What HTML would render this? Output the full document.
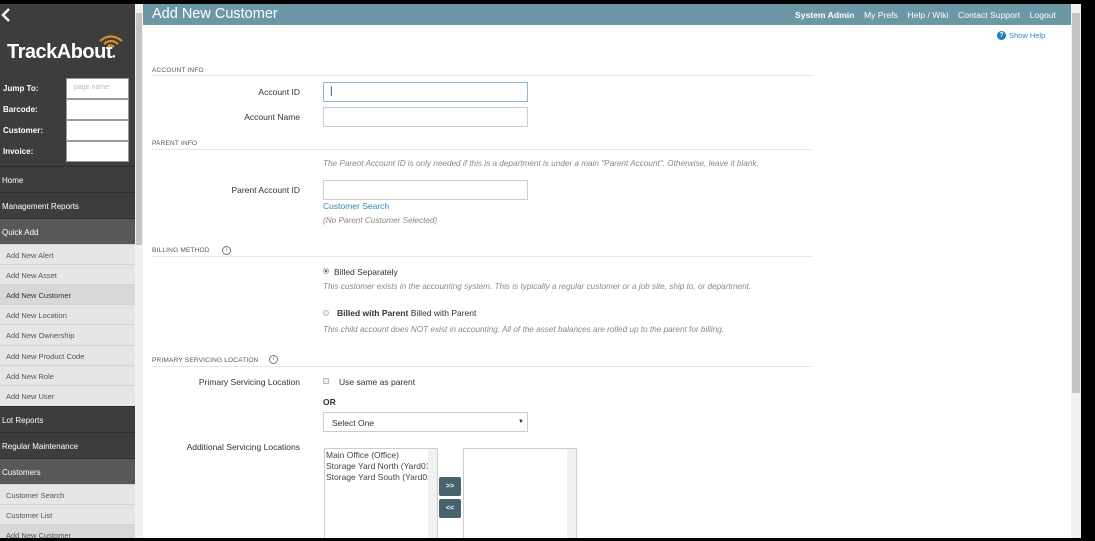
<!DOCTYPE html>
<html><head><meta charset="utf-8"><style>
*{margin:0;padding:0;box-sizing:border-box}
body{width:1095px;height:541px;background:#000;position:relative;overflow:hidden;font-family:"Liberation Sans",sans-serif}
.a{position:absolute}
#side{left:0;top:4px;width:135px;height:534px;background:#3d3d3d;overflow:hidden}
.lbl{color:#fff;font-size:8px;font-weight:bold;left:3px}
.in{background:#fff;border:1px solid #999;left:66px;width:63px;height:21px}
.nav{left:0;width:135px;height:26px;color:#fff;font-size:8px;padding:9px 0 0 2px;border-top:1px solid #2e2e2e}
.sub{left:0;width:135px;height:21px;background:#e6e6e6;color:#555;font-size:7.5px;padding:6px 0 0 6px;border-top:1px solid #d4d4d4}
.sec{font-size:6.5px;color:#555;left:152px;letter-spacing:.2px}
.hr{left:152px;width:660px;height:1px;background:#e6e6e6}
.fl{font-size:8.5px;color:#333;text-align:right;width:150px;left:150px}
.box{border:1px solid #ccc;background:#fff;left:323px;width:205px;height:20px}
.it{font-size:8.2px;color:#888;font-style:italic;left:323px}
.tx{font-size:8.5px;color:#333}
.info{width:9px;height:9px;border:1px solid #777;border-radius:50%;font-size:6px;color:#777;text-align:center;line-height:7px}
</style></head><body>
<div id="side" class="a">
 <svg class="a" style="left:1px;top:4px" width="10" height="14" viewBox="0 0 10 14"><path d="M8 1 L2 7 L8 13" fill="none" stroke="#fff" stroke-width="2.5"/></svg>
 <div class="a" style="left:7px;top:37px;color:#fff;font-size:20px;font-weight:bold;letter-spacing:-0.5px">TrackAbout<span style="font-size:6px">&#9679;</span></div>
 <svg class="a" style="left:97px;top:29px" width="28" height="16" viewBox="0 0 28 16"><g fill="none" stroke="#d7902a" stroke-width="2.2"><path d="M3 8 Q14 -1 25 8"/><path d="M7 11 Q14 5 21 11"/><path d="M11 14 Q14 11 17 14"/></g></svg>
 <div class="a lbl" style="top:80px">Jump To:</div>
 <div class="a lbl" style="top:101px">Barcode:</div>
 <div class="a lbl" style="top:122px">Customer:</div>
 <div class="a lbl" style="top:143px">Invoice:</div>
 <div class="a in" style="top:74px;font-size:7px;color:#bbb;padding:5px 0 0 7px">page name</div>
 <div class="a in" style="top:95px"></div>
 <div class="a in" style="top:116px"></div>
 <div class="a in" style="top:137px"></div>
 <div class="a nav" style="top:162px">Home</div>
 <div class="a nav" style="top:188px">Management Reports</div>
 <div class="a nav" style="top:214px;background:#585858">Quick Add</div>
 <div class="a sub" style="top:240px">Add New Alert</div>
 <div class="a sub" style="top:260px">Add New Asset</div>
 <div class="a sub" style="top:280px;background:#d8d8d8;color:#333">Add New Customer</div>
 <div class="a sub" style="top:300px">Add New Location</div>
 <div class="a sub" style="top:320px">Add New Ownership</div>
 <div class="a sub" style="top:341px">Add New Product Code</div>
 <div class="a sub" style="top:361px">Add New Role</div>
 <div class="a sub" style="top:381px">Add New User</div>
 <div class="a nav" style="top:402px">Lot Reports</div>
 <div class="a nav" style="top:428px">Regular Maintenance</div>
 <div class="a nav" style="top:454px;background:#585858">Customers</div>
 <div class="a sub" style="top:480px">Customer Search</div>
 <div class="a sub" style="top:500px">Customer List</div>
 <div class="a sub" style="top:520px;background:#d8d8d8">Add New Customer</div>
</div>
<div class="a" style="left:135px;top:4px;width:8px;height:534px;background:#f1f1f1"></div>
<div class="a" style="left:136px;top:13px;width:6px;height:232px;background:#c4c4c4"></div>
<div class="a" style="left:143px;top:4px;width:928px;height:534px;background:#fff;overflow:hidden">
<div class="a" style="left:181px;top:444px;width:114px;height:95px;border:1px solid #ccc;font-size:8.5px;color:#444;padding:1px 0 0 1px;line-height:11px;overflow:hidden;white-space:nowrap">Main Office (Office)<br>Storage Yard North (Yard01<br>Storage Yard South (Yard02</div>
<div class="a" style="left:285px;top:445px;width:9px;height:90px;background:#f1f1f1"></div>
<div class="a" style="left:320px;top:444px;width:114px;height:95px;border:1px solid #ccc"></div>
<div class="a" style="left:424px;top:445px;width:9px;height:90px;background:#f1f1f1"></div>
</div>
<div class="a" style="left:1071px;top:4px;width:10px;height:534px;background:#f1f1f1"></div>
<div class="a" style="left:1072px;top:13px;width:8px;height:380px;background:#c4c4c4"></div>
<div class="a" style="left:143px;top:4px;width:928px;height:21px;background:#6b97a6"></div>
<div class="a" style="left:152px;top:6px;color:#fff;font-size:14.5px">Add New Customer</div>
<div class="a" style="left:795px;top:10px;color:#fff;font-size:8.6px"><b>System Admin</b>&nbsp;&nbsp;&nbsp; My Prefs &nbsp;&nbsp; Help / Wiki &nbsp;&nbsp; Contact Support &nbsp;&nbsp; Logout</div>
<div class="a" style="left:997px;top:31px;width:9px;height:9px;border-radius:50%;background:#1a7fc1;color:#fff;font-size:7px;text-align:center;line-height:9px;font-weight:bold">?</div>
<div class="a" style="left:1009px;top:31px;font-size:7.5px;color:#2c8ac8">Show Help</div>

<div class="a sec" style="top:67px">ACCOUNT INFO</div><div class="a hr" style="top:75px"></div>
<div class="a fl" style="top:87px">Account ID</div>
<div class="a box" style="top:82px;border-color:#8fb8cc;padding:3px 0 0 6px;font-size:10px;color:#333">|</div>
<div class="a fl" style="top:112px">Account Name</div>
<div class="a box" style="top:107px"></div>
<div class="a sec" style="top:140px">PARENT INFO</div><div class="a hr" style="top:149px"></div>
<div class="a it" style="top:159px">The Parent Account ID is only needed if this is a department is under a main "Parent Account". Otherwise, leave it blank.</div>
<div class="a fl" style="top:185px">Parent Account ID</div>
<div class="a box" style="top:180px"></div>
<div class="a" style="left:323px;top:201px;font-size:8.5px;color:#2f86b0">Customer Search</div>
<div class="a it" style="top:216px">(No Parent Customer Selected)</div>
<div class="a sec" style="top:247px">BILLING METHOD</div><div class="a info" style="left:222px;top:246px">i</div><div class="a hr" style="top:256px"></div>
<div class="a" style="left:323px;top:268px;width:6px;height:6px;border-radius:50%;border:1px solid #aaa;background:radial-gradient(#666 40%,#eee 45%)"></div>
<div class="a tx" style="left:334px;top:267px">Billed Separately</div>
<div class="a it" style="top:282px">This customer exists in the accounting system. This is typically a regular customer or a job site, ship to, or department.</div>
<div class="a" style="left:323px;top:310px;width:6px;height:6px;border-radius:50%;border:1px solid #bbb;background:#eee"></div>
<div class="a tx" style="left:337px;top:308px"><b>Billed with Parent</b> Billed with Parent</div>
<div class="a it" style="top:325px">This child account does NOT exist in accounting. All of the asset balances are rolled up to the parent for billing.</div>
<div class="a sec" style="top:357px">PRIMARY SERVICING LOCATION</div><div class="a info" style="left:269px;top:355px">i</div><div class="a hr" style="top:366px"></div>
<div class="a fl" style="top:377px">Primary Servicing Location</div>
<div class="a" style="left:323px;top:378px;width:6px;height:6px;border:1px solid #bbb;background:#eee"></div>
<div class="a tx" style="left:339px;top:377px">Use same as parent</div>
<div class="a tx" style="left:323px;top:397px;font-weight:bold">OR</div>
<div class="a box" style="top:412px;font-size:8.5px;color:#333;padding:5px 0 0 8px">Select One<span style="position:absolute;right:3px;top:6px;font-size:6px">&#9660;</span></div>
<div class="a fl" style="top:442px">Additional Servicing Locations</div>
<div class="a" style="left:439px;top:477px;width:22px;height:19px;background:#48636d;border-radius:2px;color:#fff;font-size:7px;text-align:center;line-height:19px;font-weight:bold">&gt;&gt;</div>
<div class="a" style="left:439px;top:499px;width:22px;height:19px;background:#48636d;border-radius:2px;color:#fff;font-size:7px;text-align:center;line-height:19px;font-weight:bold">&lt;&lt;</div>
<div class="a" style="left:0;top:538px;width:1095px;height:3px;background:#000"></div>
</body></html>
